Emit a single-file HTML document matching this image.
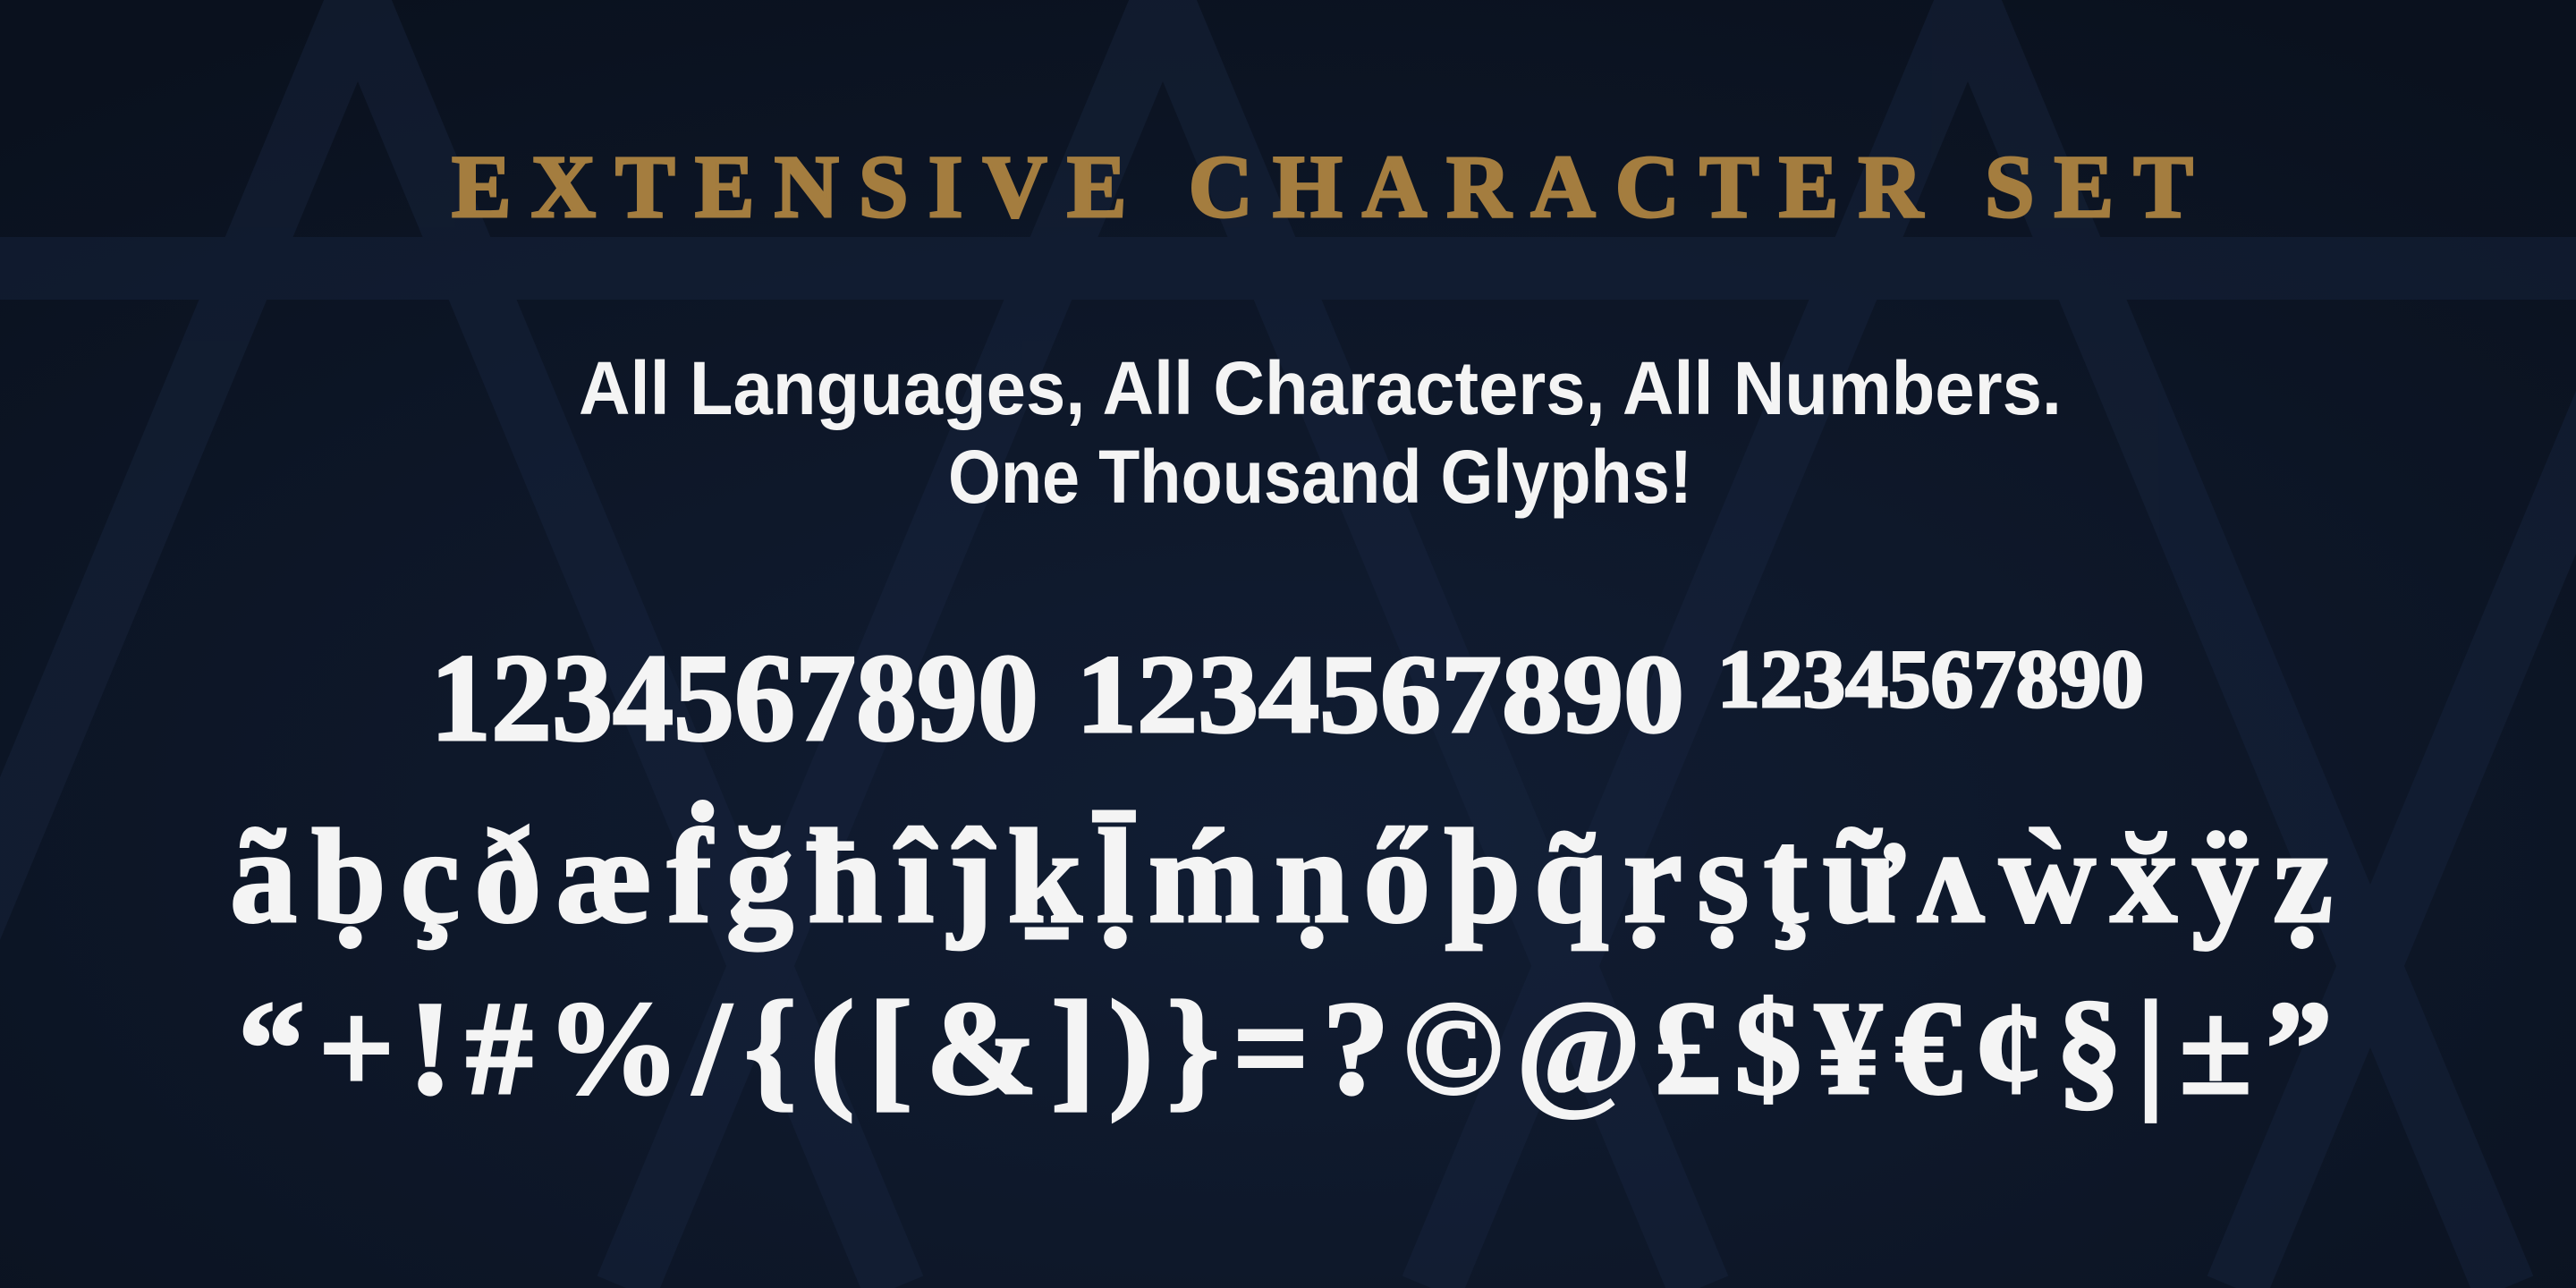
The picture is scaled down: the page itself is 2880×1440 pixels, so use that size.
<!DOCTYPE html>
<html><head><meta charset="utf-8"><style>
html,body{margin:0;padding:0;width:2880px;height:1440px;overflow:hidden;background:#0c1424;}
svg{display:block}
</style></head><body>
<svg width="2880" height="1440" viewBox="0 0 2880 1440" xmlns="http://www.w3.org/2000/svg">
<defs>
<radialGradient id="bg" cx="50%" cy="65%" r="75%">
<stop offset="0" stop-color="#111d33"/><stop offset="1" stop-color="#0a111e"/>
</radialGradient>
</defs>
<rect width="2880" height="1440" fill="url(#bg)"/>
<g fill="none" stroke="#18253f" stroke-width="70" opacity="0.45">
<path d="M-200 1440 L400 0 L1000 1440"/>
<path d="M700 1440 L1300 0 L1900 1440"/>
<path d="M1600 1440 L2200 0 L2800 1440"/>
<path d="M2500 1440 L3100 0"/>
<path d="M-100 300 L2980 300"/>
</g>
<g font-family="'Liberation Serif',serif" font-weight="bold">
<text x="505" y="242" font-size="100" textLength="1947" lengthAdjust="spacing" fill="#a47d3f" stroke="#a47d3f" stroke-width="3">EXTENSIVE CHARACTER SET</text>
</g>
<g font-family="'Liberation Sans',sans-serif" font-weight="bold" fill="#f4f4f4">
<text x="647" y="463" font-size="84" textLength="1658" lengthAdjust="spacingAndGlyphs">All Languages, All Characters, All Numbers.</text>
<text x="1060" y="562" font-size="84" textLength="832" lengthAdjust="spacingAndGlyphs">One Thousand Glyphs!</text>
</g>
<g font-family="'Liberation Serif',serif" font-weight="bold" fill="#f4f4f4" stroke="#f4f4f4" stroke-width="3">
<text x="481" y="827" font-size="140" textLength="680" lengthAdjust="spacingAndGlyphs">1234567890</text>
<text x="1203" y="818" font-size="125" textLength="680" lengthAdjust="spacingAndGlyphs">1234567890</text>
<text x="1920" y="790" font-size="92" textLength="477" lengthAdjust="spacingAndGlyphs">1234567890</text>
<text x="257" y="1030" font-size="150" textLength="2351" lengthAdjust="spacing">ã ḅ ç ð æ ḟ ğ ħ î ĵ ḵ ḹ ḿ ṇ ő þ q̃ ṛ ṣ ţ ữ ʌ ẁ x̆ ÿ ẓ</text>
<text x="266" y="1222" font-size="150" textLength="2342" lengthAdjust="spacing">“ + ! # % / { ( [ &amp; ] ) } = ? © @ £ $ ¥ € ¢ § | ± ”</text>
</g>
</svg>
</body></html>
